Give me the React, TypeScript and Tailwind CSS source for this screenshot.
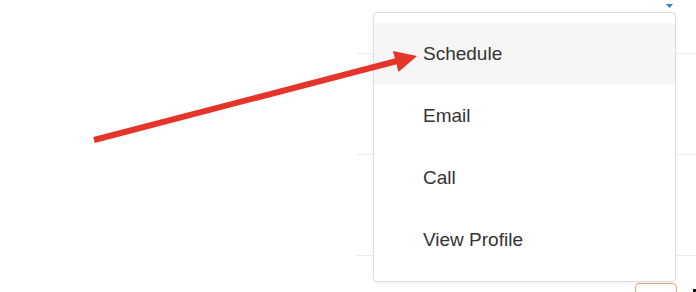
import React from "react";

const items = ["Schedule", "Email", "Call", "View Profile"];

export default function App() {
  return (
    <div
      className="relative w-[696px] h-[292px] overflow-hidden bg-white"
      style={{ fontFamily: '"Liberation Sans", Arial, Helvetica, sans-serif' }}
    >
      {/* background table rows */}
      <div className="flex h-full">
        <div className="w-[357px] shrink-0" />
        <div className="flex flex-1 flex-col">
          <div className="h-[54px] shrink-0 border-b border-[#ececec]" />
          <div className="h-[101px] shrink-0 border-b border-[#ececec]" />
          <div className="h-[101px] shrink-0 border-b border-[#ececec]" />
          <div className="flex shrink-0 items-start pt-[27px]">
            <div className="ml-[278px] h-[20px] w-[42px] shrink-0 rounded-[4px] border border-[#e9a583]" />
            <div className="ml-[16px] mt-[6px] h-[3px] w-[3px] shrink-0 bg-[#111]" />
          </div>
        </div>
      </div>

      {/* blue caret */}
      <svg className="absolute left-[666px] top-[4px]" width="7" height="5" viewBox="0 0 7 5">
        <path d="M0 0 H7 L3.5 4 Z" fill="#3a78d0" />
      </svg>

      {/* dropdown menu */}
      <div className="absolute left-[373px] top-[12px] w-[303px] rounded-[4px] border border-[#dedede] bg-white py-[10px] shadow-[0_1px_3px_rgba(0,0,0,0.06)]">
        {items.map((t, i) => (
          <div
            key={t}
            className={`flex h-[62px] items-center pl-[49px] text-[19px] text-[#333] ${
              i === 0 ? "bg-[#f6f6f6]" : ""
            }`}
          >
            {t}
          </div>
        ))}
      </div>

      {/* annotation arrow */}
      <svg className="pointer-events-none absolute left-0 top-0" width="696" height="292">
        <line x1="94" y1="140" x2="397" y2="61" stroke="#e5342a" strokeWidth="6" />
        <polygon points="417,56 392.9,50.9 398.5,72.1" fill="#e5342a" />
      </svg>
    </div>
  );
}
